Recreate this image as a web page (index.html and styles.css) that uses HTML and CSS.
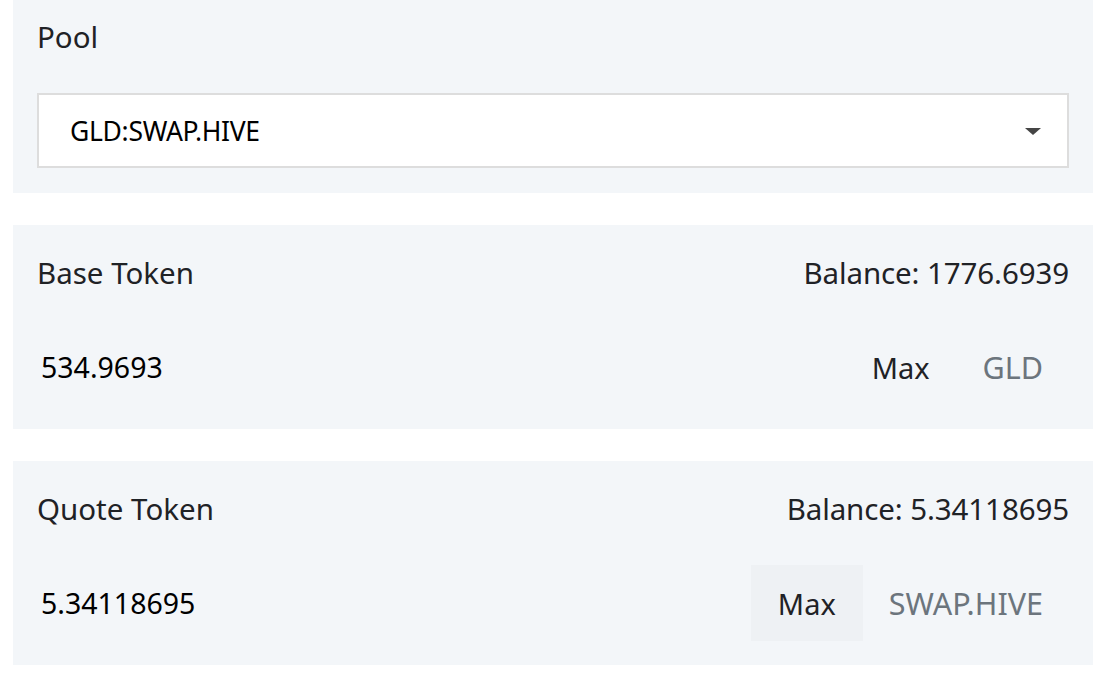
FILE: index.html
```html
<!DOCTYPE html>
<html>
<head>
<meta charset="utf-8">
<link rel="stylesheet" href="styles.css">
</head>
<body>
<div class="page">
  <section class="card">
    <div class="card-head">
      <span class="label">Pool</span>
    </div>
    <div class="select">
      <span class="select-value">GLD:SWAP.HIVE</span>
      <svg class="caret" width="16" height="7" viewBox="0 0 16 7"><path d="M0 0H16L8 7Z" fill="#454545"/></svg>
    </div>
  </section>

  <section class="card">
    <div class="card-head">
      <span class="label">Base Token</span>
      <span class="balance">Balance: 1776.6939</span>
    </div>
    <div class="amount-row">
      <span class="amount">534.9693</span>
      <span class="btn-max">Max</span>
      <span class="unit">GLD</span>
    </div>
  </section>

  <section class="card">
    <div class="card-head">
      <span class="label">Quote Token</span>
      <span class="balance">Balance: 5.34118695</span>
    </div>
    <div class="amount-row">
      <span class="amount">5.34118695</span>
      <span class="btn-max btn-hover">Max</span>
      <span class="unit">SWAP.HIVE</span>
    </div>
  </section>
</div>
</body>
</html>
```

FILE: styles.css
```css
* { box-sizing: border-box; }

html, body {
  margin: 0;
  padding: 0;
  background: #ffffff;
}

body {
  font-family: "Noto Sans", "Open Sans", sans-serif;
  color: #212529;
  overflow: hidden;
}

.page {
  width: 1080px;
  margin: -11px 0 0 13px;
  display: flex;
  flex-direction: column;
  gap: 32px;
}

.card {
  background: #f3f6f9;
  padding: 24px;
  height: 204px;
  display: flex;
  flex-direction: column;
  gap: 30px;
}

.card-head {
  height: 50px;
  padding-bottom: 3px;
  display: flex;
  align-items: center;
  justify-content: space-between;
}

.label,
.balance {
  font-size: 29.5px;
  line-height: 1;
  color: #1f2226;
}

.balance { letter-spacing: -0.1px; }

.select {
  height: 75px;
  background: #ffffff;
  border: 2px solid #dddddd;
  display: flex;
  align-items: center;
  justify-content: space-between;
  padding: 0 26px 0 31px;
}

.select-value {
  font-size: 26.5px;
  color: #000000;
  letter-spacing: -0.3px;
}

.caret { display: block; margin-top: 2px; }

.amount-row {
  height: 76px;
  display: flex;
  align-items: center;
}

.amount {
  flex: 1;
  padding-left: 4px;
  font-size: 28.5px;
  color: #000000;
}

.btn-max,
.unit {
  height: 76px;
  display: flex;
  align-items: center;
  padding: 0 26px;
  font-size: 29px;
}

.btn-max { color: #1f2226; padding: 0 27px; }

.btn-hover { background: #eef1f4; }

.unit { color: #6c757d; font-size: 30.5px; }
```
